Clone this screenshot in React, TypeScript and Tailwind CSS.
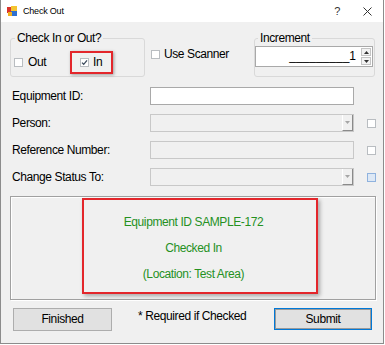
import React from 'react';

const Box = ({ checked = false, tone = 'gray' }: { checked?: boolean; tone?: 'gray' | 'blue' }) => (
  <span
    className={`inline-flex items-center justify-center w-[9px] h-[9px] shrink-0 border ${
      tone === 'blue' ? 'border-[#8fb2de] bg-[#dde8f5]' : 'border-[#b9bdc1] bg-white'
    }`}
  >
    {checked && (
      <svg width="7" height="7" viewBox="0 0 7 7">
        <path d="M1 3.6 L2.7 5.3 L6 1.4" stroke="#3b4a5c" strokeWidth="1.3" fill="none" />
      </svg>
    )}
  </span>
);

const DropArrow = () => (
  <span className="flex items-center justify-center w-[11px] h-full border-l border-l-white border-r border-b border-[#8a8a8a] bg-[#f0f0f0]">
    <svg width="5" height="3" viewBox="0 0 5 3">
      <path d="M0 0 L5 0 L2.5 3 Z" fill="#a6a6a6" />
    </svg>
  </span>
);

const Row = ({ label, children, check }: { label: string; children: React.ReactNode; check?: 'gray' | 'blue' }) => (
  <div className="flex items-center h-[18px]">
    <span className="w-[149px] shrink-0 pl-[11px]">{label}</span>
    <div className="w-[204px] shrink-0 h-full">{children}</div>
    {check && (
      <span className="ml-[13px] flex">
        <Box tone={check} />
      </span>
    )}
  </div>
);

export default function App() {
  return (
    <div className="w-[385px] h-[345px] bg-white font-['Liberation_Sans',Arial,sans-serif] text-[12px] tracking-[-0.4px] leading-[15px] text-black">
      <div className="w-[384px] h-[344px] border-l border-r border-b border-[#8c8c8c] flex flex-col">
        {/* title bar */}
        <div className="h-[22px] bg-white flex items-center shrink-0">
          <svg className="ml-[6px]" width="10" height="10" viewBox="0 0 10 10">
            <rect x="0" y="1" width="6" height="6" fill="#d9342b" />
            <rect x="4" y="0" width="6" height="5" fill="#f4c430" />
            <rect x="4" y="5" width="6" height="5" fill="#2d6fd0" />
            <rect x="1" y="6" width="4" height="4" fill="#f0b020" />
          </svg>
          <span className="ml-[6px] text-[9px] tracking-[-0.2px]">Check Out</span>
          <span className="ml-auto text-[11px] text-[#333]">?</span>
          <svg className="ml-[23px] mr-[11px]" width="9" height="9" viewBox="0 0 9 9">
            <path d="M0.5 0.5 L8.5 8.5 M8.5 0.5 L0.5 8.5" stroke="#333" strokeWidth="1" />
          </svg>
        </div>

        {/* body */}
        <div className="flex-1 bg-[#f0f0f0] flex flex-col">
          <div className="flex items-start mt-[9px]">
            <fieldset className="ml-[9px] w-[135px] h-[46px] border border-[#d9d9d9] rounded-[3px]">
              <legend className="ml-[4px] px-[2px]">Check In or Out?</legend>
              <div className="flex items-center mt-[5px] pl-[3px]">
                <div className="flex items-center gap-[5px] w-[56px]">
                  <Box />
                  <span>Out</span>
                </div>
                <div className="flex items-center gap-[4px] w-[43px] h-[23px] pl-[8px] border-2 border-[#e3262b] shadow-[1px_1px_3px_rgba(0,0,0,0.35)]">
                  <Box checked />
                  <span>In</span>
                </div>
              </div>
            </fieldset>

            <div className="flex items-center gap-[4px] ml-[6px] mt-[16px] h-[15px]">
              <Box />
              <span>Use Scanner</span>
            </div>

            <fieldset className="ml-auto mr-[8px] w-[121px] h-[46px] border border-[#d9d9d9] rounded-[3px]">
              <legend className="ml-[3px] px-[2px]">Increment</legend>
              <div className="flex items-center w-[118px] h-[21px] bg-white border border-[#a9a9a9]">
                <span className="flex-1 text-right tracking-normal">_________1</span>
                <div className="ml-[5px] mr-[1px] flex flex-col gap-[1px]">
                  <span className="flex items-center justify-center w-[10px] h-[8px] border border-[#c4c4c4] bg-[#f3f3f3]">
                    <svg width="5" height="3" viewBox="0 0 5 3">
                      <path d="M0 3 L5 3 L2.5 0 Z" fill="#333" />
                    </svg>
                  </span>
                  <span className="flex items-center justify-center w-[10px] h-[8px] border border-[#c4c4c4] bg-[#f3f3f3]">
                    <svg width="5" height="3" viewBox="0 0 5 3">
                      <path d="M0 0 L5 0 L2.5 3 Z" fill="#333" />
                    </svg>
                  </span>
                </div>
              </div>
            </fieldset>
          </div>

          <div className="flex flex-col gap-[9px] mt-[10px]">
            <Row label="Equipment ID:">
              <div className="h-full bg-white border border-[#a9a9a9]" />
            </Row>
            <Row label="Person:" check="gray">
              <div className="h-full flex bg-[#f0f0f0] border border-[#c8c8c8]">
                <div className="flex-1" />
                <DropArrow />
              </div>
            </Row>
            <Row label="Reference Number:" check="gray">
              <div className="h-full bg-[#f0f0f0] border border-[#c8c8c8]" />
            </Row>
            <Row label="Change Status To:" check="blue">
              <div className="h-full flex bg-[#f0f0f0] border border-[#c8c8c8]">
                <div className="flex-1" />
                <DropArrow />
              </div>
            </Row>
          </div>

          {/* result panel */}
          <div className="ml-[9px] mt-[10px] w-[366px] h-[104px] flex border border-[#a0a0a0] shadow-[inset_1px_1px_0_#ffffff,1px_1px_0_#ffffff]">
            <div className="ml-[71px] mt-[1px] w-[236px] h-[96px] border-2 border-[#e3262b] shadow-[2px_2px_4px_rgba(0,0,0,0.3)] flex flex-col items-center pt-[15px] pr-[13px] gap-[11px] text-[#25911f]">
              <span>Equipment ID SAMPLE-172</span>
              <span>Checked In</span>
              <span>(Location: Test Area)</span>
            </div>
          </div>

          {/* buttons */}
          <div className="flex items-start mt-[8px]">
            <button className="ml-[12px] w-[99px] h-[23px] bg-[#e1e1e1] border border-[#adadad]">Finished</button>
            <span className="ml-[26px] mt-[1px]">* Required if Checked</span>
            <button className="ml-auto mr-[11px] w-[98px] h-[22px] bg-[#e1e1e1] border border-[#0078d7] shadow-[inset_0_0_0_1px_#9a9a9a]">
              Submit
            </button>
          </div>
        </div>
      </div>
    </div>
  );
}
